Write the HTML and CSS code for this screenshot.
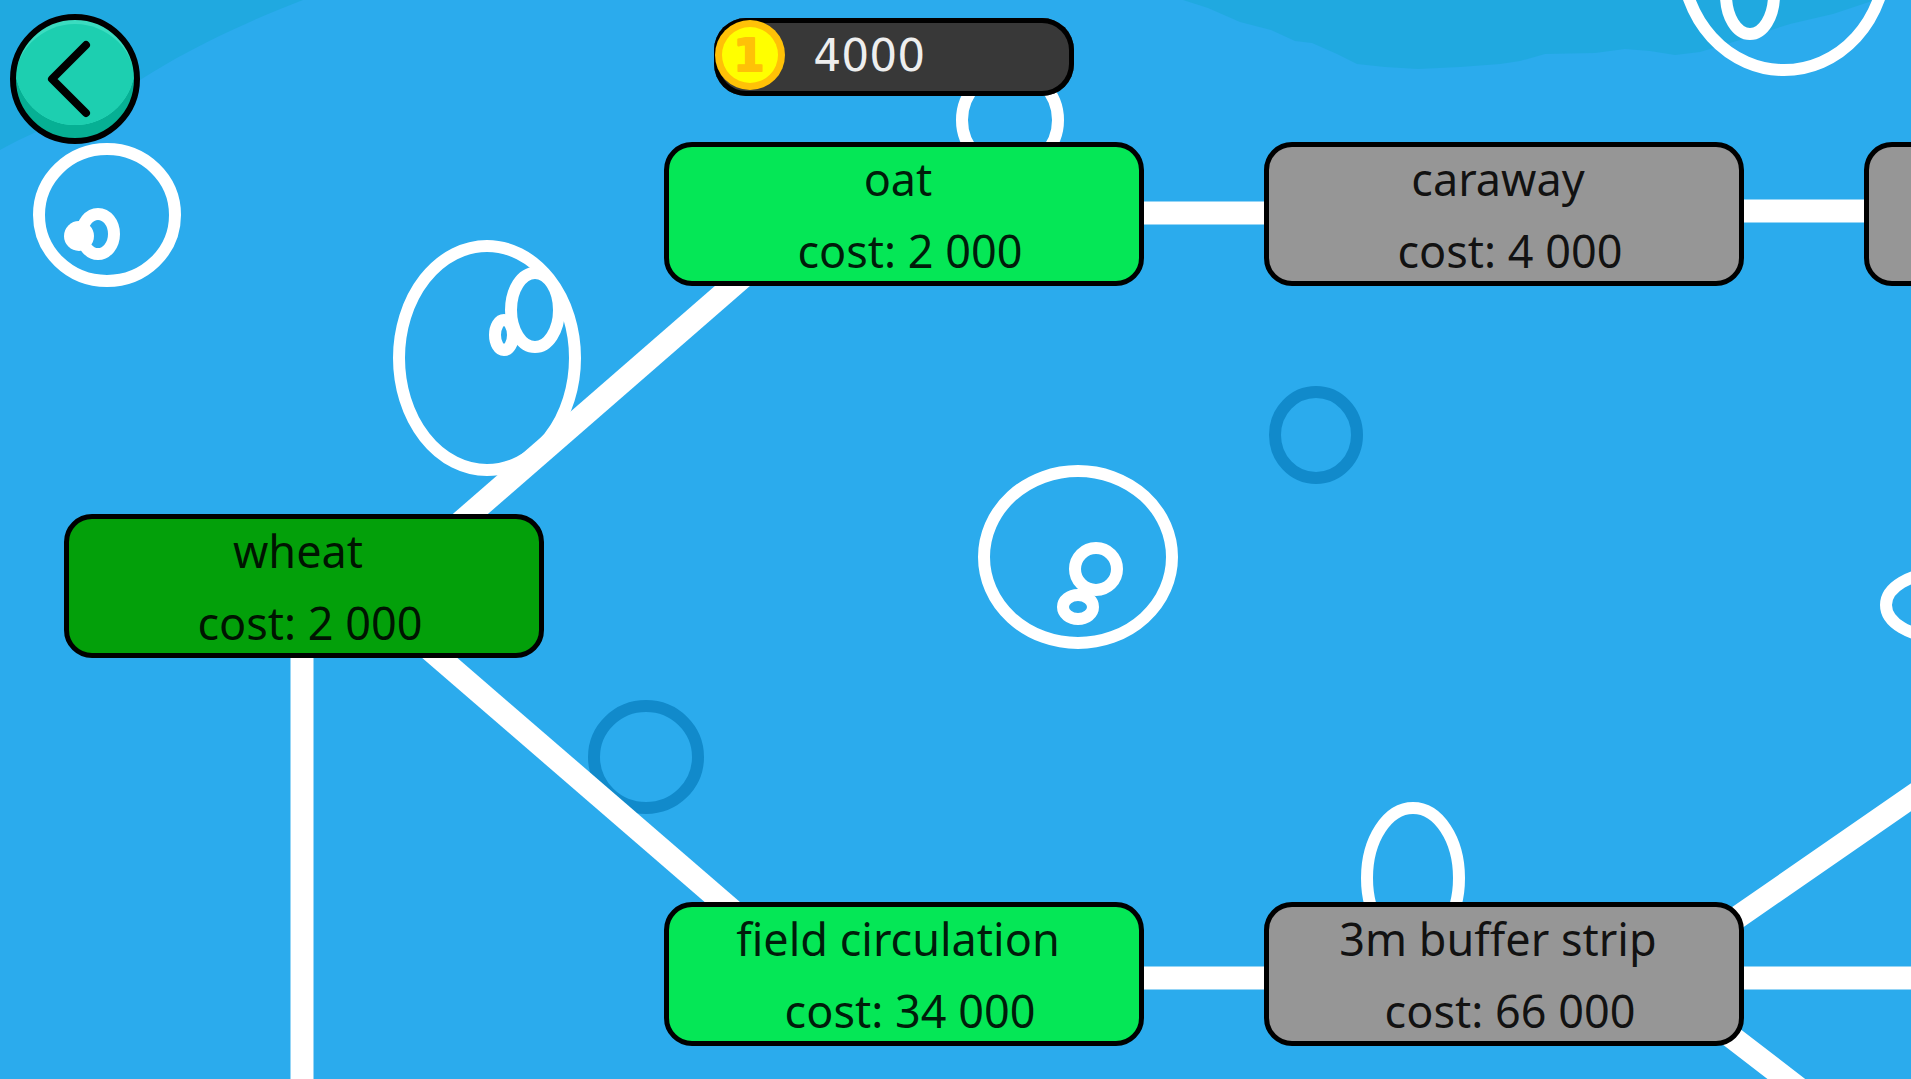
FILE: index.html
```html
<!DOCTYPE html>
<html lang="en">
<head>
  <meta charset="utf-8">
  <meta name="viewport" content="width=device-width, initial-scale=1">
  <title>Research tree</title>
  <link rel="stylesheet" href="styles.css">
</head>
<body>
  <main class="tree">
    <svg class="scene" aria-hidden="true">
      <g class="patches">
        <path d="M0 0H303C235 26 180 54 140 80C95 112 50 122 0 150Z"/>
        <path d="M1183 0L1208 8L1240 22L1271 30L1295 41L1312 43L1337 54L1357 64L1385 67L1418 69L1460 67L1500 64L1520 61L1545 54L1595 53L1625 49L1650 51L1675 55L1700 52L1740 40L1790 24L1833 14L1860 5L1875 0Z"/>
      </g>
      <g class="rings rings-dark">
        <ellipse cx="1316" cy="435" rx="41" ry="43"/>
        <ellipse cx="646" cy="757" rx="52" ry="51"/>
      </g>
      <g class="rings">
        <ellipse cx="107" cy="215" rx="68" ry="66"/>
        <ellipse cx="98" cy="234" rx="16" ry="20"/>
        <circle class="dot" cx="79" cy="236" r="15"/>
        <ellipse cx="487" cy="358" rx="88" ry="112"/>
        <ellipse cx="535" cy="310" rx="24" ry="37"/>
        <ellipse cx="504" cy="335" rx="9" ry="15"/>
        <ellipse cx="1078" cy="557" rx="94" ry="86"/>
        <ellipse cx="1096" cy="569" rx="21" ry="21"/>
        <ellipse cx="1078" cy="607" rx="15" ry="12"/>
        <ellipse cx="1010" cy="120" rx="48" ry="49"/>
        <ellipse cx="1784" cy="-42" rx="102" ry="112"/>
        <ellipse cx="1750" cy="-5" rx="24" ry="39"/>
        <ellipse cx="1940" cy="605" rx="54" ry="32"/>
        <ellipse cx="1413" cy="878" rx="46" ry="70"/>
      </g>
      <g class="links">
        <path d="M302 640V1400"/>
        <path d="M437 543L768 255"/>
        <path d="M404 627L757 932"/>
        <path d="M1120 213H1290M1720 211H1890"/>
        <path d="M1120 978H1290M1720 978H2000"/>
        <path d="M1709 937L1998 737M1707 1018L1880 1151"/>
      </g>
    </svg>

    <button class="node node-owned wheat" type="button"><span class="name">wheat</span><span class="cost">cost: 2 000</span></button>
    <button class="node node-open oat" type="button"><span class="name">oat</span><span class="cost">cost: 2 000</span></button>
    <button class="node node-locked caraway" type="button"><span class="name">caraway</span><span class="cost">cost: 4 000</span></button>
    <button class="node node-locked upcoming" type="button" aria-label="Locked"></button>
    <button class="node node-open circulation" type="button"><span class="name">field circulation</span><span class="cost">cost: 34 000</span></button>
    <button class="node node-locked buffer" type="button"><span class="name">3m buffer strip</span><span class="cost">cost: 66 000</span></button>

    <header class="hud">
      <button class="back" type="button" aria-label="Back">
        <svg class="back-icon" viewBox="0 0 131 131" aria-hidden="true">
          <defs>
            <clipPath id="disc"><circle cx="65" cy="65" r="62"/></clipPath>
            <clipPath id="face"><circle cx="65" cy="51" r="60"/></clipPath>
          </defs>
          <g clip-path="url(#disc)">
            <rect width="131" height="131" fill="#06b094"/>
            <circle cx="65" cy="51" r="60" fill="#3bdcc0"/>
            <circle cx="65" cy="71" r="61" fill="#1dcfb0" clip-path="url(#face)"/>
          </g>
          <circle cx="65" cy="65" r="62" fill="none" stroke="#000" stroke-width="6"/>
          <path d="M76 31L42 65L76 99" fill="none" stroke="#000" stroke-width="8" stroke-linecap="round" stroke-linejoin="round"/>
        </svg>
      </button>
      <div class="balance">
        <svg class="coin" viewBox="0 0 70 70" aria-hidden="true">
          <circle cx="35" cy="35" r="35" fill="#ffc107"/>
          <circle cx="35" cy="35" r="28" fill="#ffff00"/>
          <text class="coin-mark" x="34" y="51">1</text>
        </svg>
        <span class="amount">4000</span>
      </div>
    </header>
  </main>
</body>
</html>
```

FILE: styles.css
```css
* {
  box-sizing: border-box;
}

body {
  margin: 0;
  font-family: "Noto Sans", "Open Sans", sans-serif;
}

.tree {
  position: relative;
  height: 100vh;
  overflow: hidden;
  background: #2babed;
}

.scene {
  display: block;
  width: 100%;
  height: 100%;
}

.patches {
  fill: #20a9e0;
}

.rings {
  fill: none;
  stroke: #fff;
  stroke-width: 12px;
}

.rings-dark {
  stroke: #118acb;
}

.dot {
  fill: #fff;
  stroke: none;
}

.links {
  fill: none;
  stroke: #fff;
  stroke-width: 23px;
}

/* Tree nodes, placed on the free canvas */
.node {
  position: absolute;
  display: flex;
  flex-direction: column;
  width: 480px;
  height: 144px;
  padding: 0;
  border: 5px solid #000;
  border-radius: 28px;
  font: inherit;
  font-size: 45px;
  line-height: 72px;
  text-align: center;
  color: rgba(0, 0, 0, 0.88);
  cursor: pointer;
}

.name {
  height: 72px;
  margin-top: -4px;
  padding-right: 12px;
}

.cost {
  padding-left: 12px;
}

.node-owned {
  background: #03a00a;
}

.node-open {
  background: #05e756;
}

.node-locked {
  background: #969696;
}

.wheat {
  left: 64px;
  top: 514px;
}

.oat {
  left: 664px;
  top: 142px;
}

.caraway {
  left: 1264px;
  top: 142px;
}

.upcoming {
  left: 1864px;
  top: 142px;
}

.circulation {
  left: 664px;
  top: 902px;
}

.buffer {
  left: 1264px;
  top: 902px;
}

/* Heads-up bar, lies over the tree */
.hud {
  position: absolute;
  inset: 0 0 auto 0;
  display: flex;
  align-items: flex-start;
  padding: 14px 10px;
}

.back {
  width: 131px;
  height: 131px;
  padding: 0;
  border: 0;
  border-radius: 50%;
  background: none;
  cursor: pointer;
}

.back-icon {
  display: block;
}

.balance {
  display: flex;
  gap: 28px;
  width: 360px;
  height: 78px;
  margin: 4px 0 0 30vw;
  padding: 2px 1px;
  border-radius: 32px;
  background: #383838;
  box-shadow: inset 0 0 0 5px #000;
}

.coin {
  width: 70px;
  height: 70px;
}

.coin-mark {
  font-family: "DejaVu Sans", sans-serif;
  font-size: 45px;
  font-weight: 700;
  text-anchor: middle;
  fill: #ffc107;
  stroke: #ffc107;
  stroke-width: 2px;
  stroke-linejoin: round;
}

.amount {
  font-family: "DejaVu Sans", "Noto Sans", sans-serif;
  font-size: 44px;
  line-height: 72px;
  color: #eee;
}
```
